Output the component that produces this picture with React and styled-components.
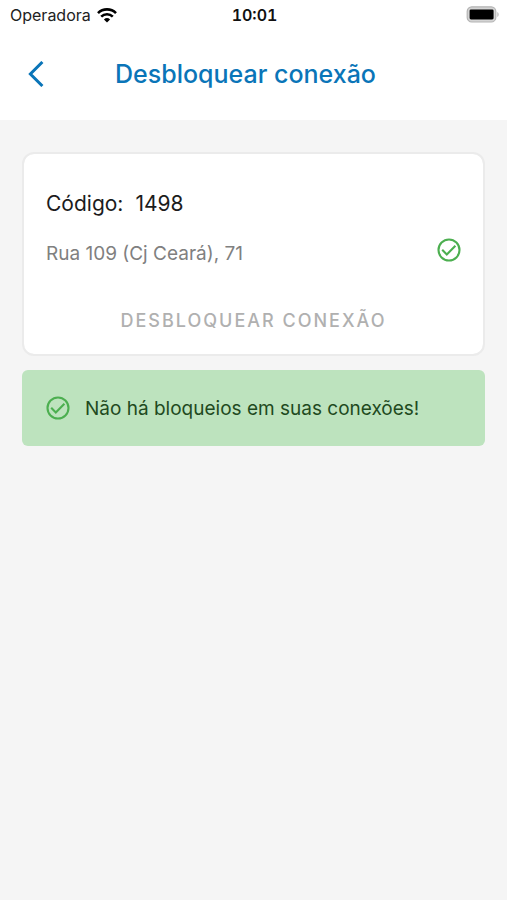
import styled, { createGlobalStyle } from "styled-components";

const App = () => {
  return (
    <>
      <GlobalStyle />
      <Page>
        <StatusBar>
          <Carrier>
            Operadora
            <WifiIcon />
          </Carrier>
          <Clock>10:01</Clock>
          <BatterySlot>
            <BatteryIcon />
          </BatterySlot>
        </StatusBar>
        <Header>
          <BackButton type="button" aria-label="Voltar">
            <ChevronIcon />
          </BackButton>
          <Title>Desbloquear conexão</Title>
        </Header>
        <Content>
          <Card>
            <Code>
              <span>Código:</span>
              <span>1498</span>
            </Code>
            <AddressRow>
              <Address>Rua 109 (Cj Ceará), 71</Address>
              <CheckIcon />
            </AddressRow>
            <UnlockButton type="button" disabled>
              Desbloquear conexão
            </UnlockButton>
          </Card>
          <Alert role="status">
            <CheckIcon />
            Não há bloqueios em suas conexões!
          </Alert>
        </Content>
      </Page>
    </>
  );
};

export default App;

const WifiIcon = () => (
  <svg width="20" height="15" viewBox="0 0 20 15" aria-hidden="true">
    <path
      d="M1 5.1a12.8 12.8 0 0 1 18 0M4.2 8.6a8.3 8.3 0 0 1 11.6 0"
      fill="none"
      stroke="#000"
      strokeWidth="2.6"
    />
    <path d="M10 14.4 6.9 11.4a4.6 4.6 0 0 1 6.2 0Z" />
  </svg>
);

const BatteryIcon = () => (
  <svg width="33" height="18" viewBox="0 0 33 18" aria-hidden="true">
    <rect
      x="1.2"
      y="0.8"
      width="28.6"
      height="15.2"
      rx="4.6"
      fill="#d4d4d4"
      stroke="#b4b4b4"
      strokeWidth="1.2"
    />
    <rect x="3.6" y="3.4" width="24" height="10" rx="1.4" />
    <path d="M31.4 5.9c1.6.8 1.6 4.2 0 5Z" fill="#b4b4b4" />
  </svg>
);

const ChevronIcon = () => (
  <svg width="16" height="26" viewBox="0 0 16 26" aria-hidden="true">
    <path
      d="M14.4 1 2.4 13l12 12"
      fill="none"
      stroke="#0a75b8"
      strokeWidth="3"
    />
  </svg>
);

const CheckIcon = () => (
  <svg width="24" height="24" viewBox="0 0 24 24" aria-hidden="true">
    <g fill="none" stroke="#4caf50" strokeWidth="2.1">
      <circle cx="12" cy="12" r="10.5" />
      <path d="m5.2 11.8 4.6 4.6 8.6-8.6" />
    </g>
  </svg>
);

const GlobalStyle = createGlobalStyle`
  body {
    margin: 0;
    background-color: #f5f5f5;
    font-family: "Inter", sans-serif;
  }
`;

const Page = styled.div`
  min-height: 100vh;
`;

const StatusBar = styled.div`
  display: grid;
  grid-template-columns: 1fr auto 1fr;
  align-items: center;
  height: 30px;
  padding: 0 8px 0 10px;
  box-sizing: border-box;
  background-color: #fff;
  font-size: 16px;
  color: #222;
`;

const Carrier = styled.div`
  display: flex;
  align-items: center;
  gap: 6px;
`;

const Clock = styled.time`
  font-weight: 600;
  font-variant-numeric: tabular-nums;
  color: #111;
`;

const BatterySlot = styled.div`
  display: flex;
  justify-content: flex-end;
`;

const Header = styled.header`
  display: grid;
  grid-template-columns: 44px 1fr 44px;
  align-items: center;
  height: 90px;
  padding: 0 30px 2px 14px;
  box-sizing: border-box;
  background-color: #fff;
`;

const BackButton = styled.button`
  display: flex;
  align-items: center;
  justify-content: center;
  height: 44px;
  padding: 0;
  border: none;
  background: none;
`;

const Title = styled.h1`
  margin: 0;
  font-size: 25px;
  font-weight: 500;
  line-height: 32px;
  text-align: center;
  color: #0a75b8;
`;

const Content = styled.main`
  display: flex;
  flex-direction: column;
  gap: 14px;
  padding: 32px 22px;
`;

const Card = styled.section`
  padding: 36px 22px 14px;
  border: 2px solid #ebebeb;
  border-radius: 12px;
  background-color: #fff;
  background-clip: padding-box;
`;

const Code = styled.div`
  display: flex;
  gap: 12px;
  font-size: 21px;
  line-height: 28px;
  color: #1c1c1c;
`;

const AddressRow = styled.div`
  display: flex;
  justify-content: space-between;
  margin-top: 20px;
`;

const Address = styled.div`
  padding-top: 3px;
  font-size: 19px;
  line-height: 26px;
  color: #808080;
`;

const UnlockButton = styled.button`
  width: 100%;
  height: 40px;
  margin-top: 33px;
  padding: 0;
  border: none;
  background: none;
  font-family: inherit;
  font-size: 18px;
  font-weight: 500;
  letter-spacing: 2px;
  text-transform: uppercase;
  color: #b0b0b0;
`;

const Alert = styled.div`
  display: flex;
  align-items: center;
  gap: 15px;
  min-height: 76px;
  padding: 0 24px;
  box-sizing: border-box;
  border-radius: 6px;
  background-color: #bde3be;
  font-size: 19px;
  color: #1f4a21;
`;
